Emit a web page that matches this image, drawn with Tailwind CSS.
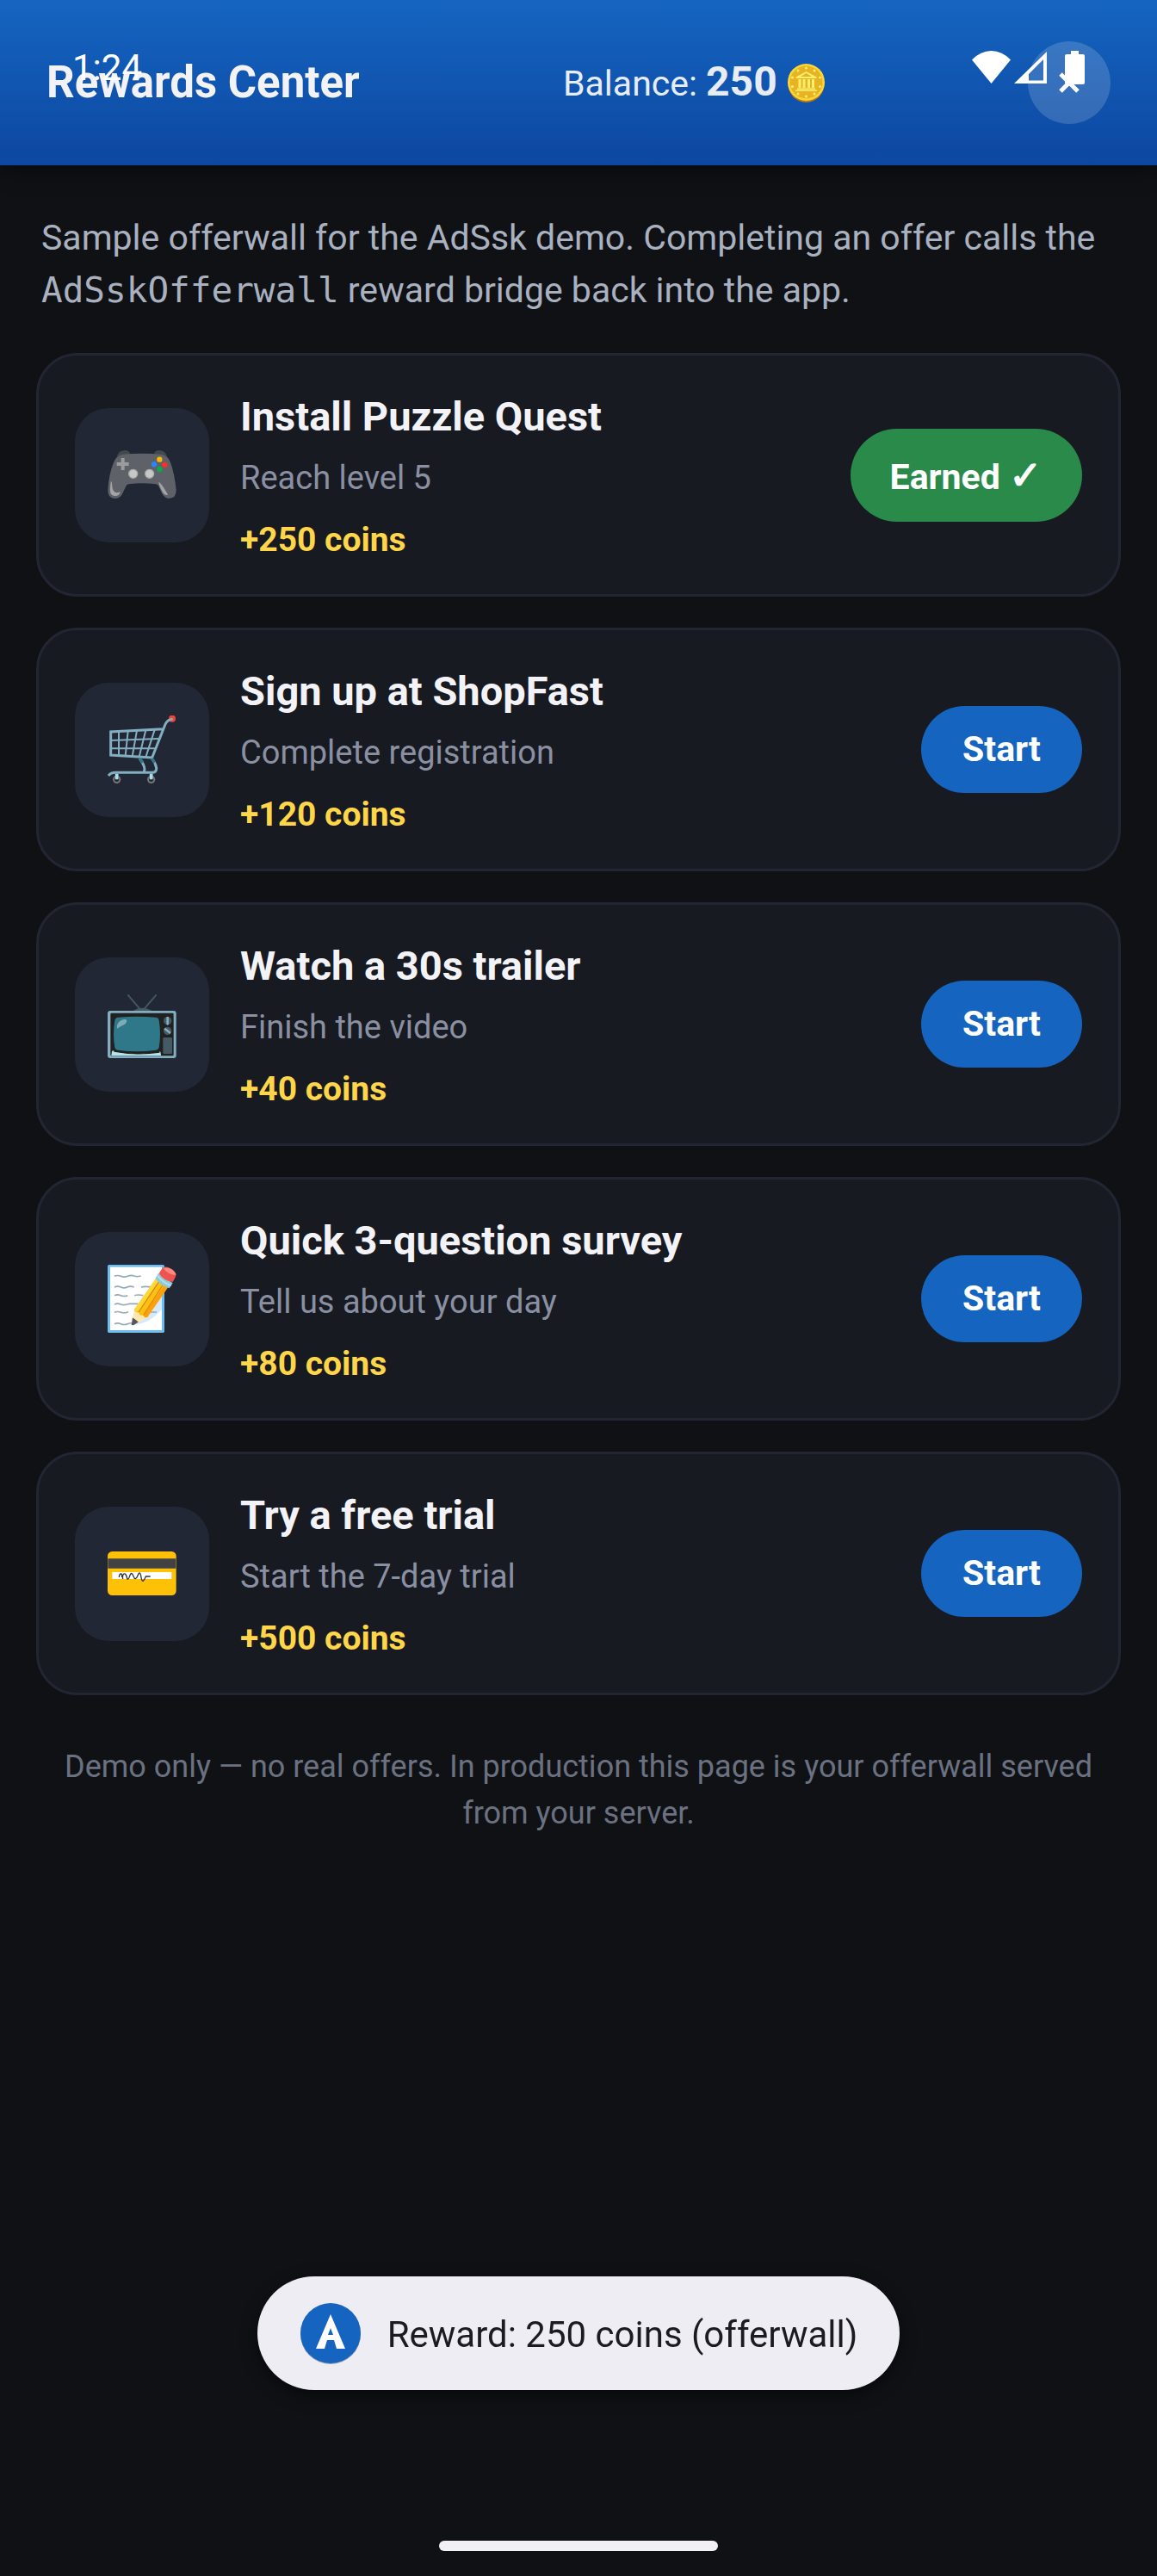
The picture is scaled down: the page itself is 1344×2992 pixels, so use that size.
<!DOCTYPE html>
<html lang="en">
<head>
<meta charset="utf-8">
<meta name="viewport" content="width=device-width, initial-scale=1">
<title>Rewards Center</title>
<script src="https://cdn.jsdelivr.net/npm/@tailwindcss/browser@4"></script>
</head>
<body class="relative min-h-screen bg-[#0f1115] font-['Roboto',sans-serif] text-[#f2f2f7]">

<header class="flex h-48 items-center justify-between bg-linear-to-b from-[#1565c0] to-[#0d47a1] px-[54px] shadow-[0_6px_24px_rgba(0,0,0,0.4)]">
  <h1 class="text-[51px] leading-[60px] font-bold">Rewards Center</h1>
  <p class="flex items-baseline gap-3 text-[41px] leading-[60px] text-[#e8ecf5]">
    <span>Balance: <b class="text-[48px] font-bold">250</b></span>
    <svg class="h-[45px] w-[43px] self-center" viewBox="0 0 86 90" aria-label="coin">
      <ellipse cx="43" cy="47" rx="42" ry="43" fill="#c47a12"/>
      <ellipse cx="43" cy="43" rx="43" ry="43" fill="#fdd835"/>
      <ellipse cx="43" cy="43" rx="38" ry="38" fill="#e6b422"/>
      <g fill="#fdee6b">
        <path d="M43 18 19 31v3h48v-3zM22 57h42v3H22zM18 61h50v3H18z"/>
        <path d="M25 36h6v20h-6zM35 36h6v20h-6zM46 36h6v20h-6zM56 36h6v20h-6z"/>
        <circle cx="43" cy="10" r="3"/><circle cx="24" cy="16" r="3"/><circle cx="62" cy="16" r="3"/>
        <circle cx="11" cy="32" r="3"/><circle cx="75" cy="32" r="3"/><circle cx="11" cy="53" r="3"/>
        <circle cx="75" cy="53" r="3"/><circle cx="24" cy="70" r="3"/><circle cx="62" cy="70" r="3"/><circle cx="43" cy="76" r="3"/>
      </g>
      <path d="M43 22 30 30h26z" fill="#e6b422"/>
    </svg>
  </p>
  <button type="button" aria-label="Close" class="flex size-24 items-center justify-center rounded-full bg-white/16">
    <svg class="size-6" viewBox="0 0 24 24" fill="none" stroke="#fff" stroke-width="5"><path d="M2 2 22 22M22 2 2 22"/></svg>
  </button>
</header>

<!-- System status bar -->
<div class="pointer-events-none absolute inset-x-0 top-0 flex items-start justify-between px-[84px] pt-[54px] text-white">
  <span class="text-[42px] leading-[50px]">1:24</span>
  <div class="flex items-start pt-[5px]">
    <svg class="h-[39px] w-[45px]" viewBox="0 0 45 39" fill="#fff"><path d="M0 10.500Q10 0 22.500 0T45 10.500L22.500 38z"/></svg>
    <svg class="ml-1 h-[39px] w-[38px]" viewBox="0 0 38 39" fill="#fff" fill-rule="evenodd"><path d="M38 1V38H0zM34 10 17 27V34.500H34z"/></svg>
    <svg class="ml-[21px] h-[39px] w-[23px]" viewBox="0 0 23 39" fill="#fff"><path d="M7 0h9v4h5q2 0 2 2v31q0 2-2 2H2q-2 0-2-2V6q0-2 2-2h5z"/></svg>
  </div>
</div>

<main class="px-[42px] pt-[54px]">
  <p class="px-[6px] text-[41px] leading-[61px] text-[#a9b0bf]">Sample offerwall for the AdSsk demo. Completing an offer calls the <code class="font-['DejaVu_Sans_Mono',monospace] text-[41px]">AdSskOfferwall</code> reward bridge back into the app.</p>

  <ul class="mt-[42px] flex flex-col gap-9">
    <li class="flex items-center gap-9 rounded-[48px] border-3 border-[#222633] bg-[#171a21] px-[42px] py-[39px]">
      <div class="flex size-[156px] items-center justify-center rounded-[39px] bg-[#222736]">
        <svg class="size-20" viewBox="195 186 240 240">
          <path d="M227 245q3-25 28-26 15 0 18 12l-5 20zM403 245q-4-25-28-26-15 0-18 12l5 20z" fill="#434a4d"/>
          <path d="M245 234Q315 227 385 234 407 240 415 264 428 300 434 358 434 387 408 387 393 386 384 368L372 342Q369 337 362 337 315 330 268 337 262 338 259 344L246 371Q238 387 220 387 195 386 196 358 200 300 215 264 224 240 245 234z" fill="#5e6268"/>
          <path d="M242 246h12v15h15v12h-15v15h-12v-15h-15v-12h15z" fill="#9b9c9e"/>
          <circle cx="376" cy="251" r="9.500" fill="#fdb605"/><circle cx="357" cy="268" r="9.500" fill="#2886f7"/>
          <circle cx="394" cy="270" r="9.500" fill="#f83126"/><circle cx="376" cy="285" r="9.500" fill="#0aa94b"/>
          <g fill="#c7c7c7" stroke="#aaabac" stroke-width="4"><circle cx="284" cy="301" r="15"/><circle cx="341" cy="301" r="15"/></g>
          <path d="M207 326q3 0 4 20 4 30 28 17-2 16-20 15-16-2-15-20 0-22 3-32zM373 330q6 2 16 17 8 12 16 27-8 3-16-6-14-22-16-38z" fill="#a3a4a6"/>
        </svg>
      </div>
      <div class="min-w-0 flex-1">
        <h2 class="text-[47px] leading-[63px] font-bold">Install Puzzle Quest</h2>
        <p class="mt-[10px] text-[38px] leading-[60px] text-[#8a90a2]">Reach level 5</p>
        <p class="mt-[18px] text-[39px] leading-[48px] font-bold text-[#ffd54a]">+250 coins</p>
      </div>
      <button type="button" class="rounded-full bg-[#2a8a4a] px-[46px] pt-[26px] pb-[22px] text-[41px] leading-[60px] font-bold text-white">Earned <span class="text-[46px] leading-none">✓</span></button>
    </li>

    <li class="flex items-center gap-9 rounded-[48px] border-3 border-[#222633] bg-[#171a21] px-[42px] py-[39px]">
      <div class="flex size-[156px] items-center justify-center rounded-[39px] bg-[#222736]">
        <svg class="size-20" viewBox="195 183 240 240" fill="none">
          <g stroke="#82aec0">
            <path d="M388 230 206 240V321L350 330 396 214Q401 200 422 194" stroke-width="9"/>
            <path d="M234 240v82M266 238 257 324M297 236 281 326M328 234 305 327M359 233 328 328" stroke-width="6"/>
            <path d="M206 270 372 264M206 298H360" stroke-width="6"/>
            <path d="M198 393Q206 382 222 382H352Q366 380 365 366 363 350 350 334M306 333Q332 366 320 382" stroke-width="9"/>
          </g>
          <path d="m306 333 12 14M349 334l10 13" stroke="#2f7889" stroke-width="10"/>
          <circle cx="420" cy="194" r="12" fill="#f44336"/><path d="m404 202 18-8" stroke="#82aec0" stroke-width="8"/>
          <circle cx="227" cy="406" r="11" stroke="#757575" stroke-width="6"/><circle cx="347" cy="406" r="11" stroke="#757575" stroke-width="6"/>
          <path d="M227 386v20M347 386v20" stroke="#a5dff0" stroke-width="11"/>
        </svg>
      </div>
      <div class="min-w-0 flex-1">
        <h2 class="text-[47px] leading-[63px] font-bold">Sign up at ShopFast</h2>
        <p class="mt-[10px] text-[38px] leading-[60px] text-[#8a90a2]">Complete registration</p>
        <p class="mt-[18px] text-[39px] leading-[48px] font-bold text-[#ffd54a]">+120 coins</p>
      </div>
      <button type="button" class="rounded-full bg-[#1565c0] px-12 py-6 text-[41px] leading-[53px] font-bold text-white">Start</button>
    </li>

    <li class="flex items-center gap-9 rounded-[48px] border-3 border-[#222633] bg-[#171a21] px-[42px] py-[39px]">
      <div class="flex size-[156px] items-center justify-center rounded-[39px] bg-[#222736]">
        <svg class="size-20" viewBox="195 180 240 240">
          <path d="m265 196 42 49M365 196l-42 49" stroke="#455a64" stroke-width="5"/>
          <path d="M284 252q30-19 66 0z" fill="#455a64"/>
          <rect x="195" y="252" width="239" height="165" rx="9" fill="#82aec0"/>
          <rect x="205" y="260" width="220" height="149" rx="4" fill="#212121"/>
          <path d="M208 408 210 394Q214 388 222 394 300 412 374 393 380 390 381 408z" fill="#b2e4ea"/>
          <path d="M217 389Q300 412 378 389L376 398Q300 410 217 395z" fill="#212121"/>
          <path d="M231 275Q298 270 363 275 373 276 374 286 382 335 374 380 372 388 363 389 298 398 231 389 222 388 220 380 212 335 220 286 222 276 231 275z" fill="#2f7889"/>
          <path d="M228 314q-3-16 10-26 12-9 22-5 5 7-5 16-12 5-27 15z" fill="#7eabb6"/>
          <circle cx="404" cy="287" r="14" fill="#455a64"/><circle cx="404" cy="322" r="14" fill="#455a64"/>
          <path d="M404 276v22M396 316l15 12" stroke="#82aec0" stroke-width="8" stroke-linecap="round"/>
          <rect x="388" y="345" width="32" height="57" rx="4" fill="#455a64"/>
        </svg>
      </div>
      <div class="min-w-0 flex-1">
        <h2 class="text-[47px] leading-[63px] font-bold">Watch a 30s trailer</h2>
        <p class="mt-[10px] text-[38px] leading-[60px] text-[#8a90a2]">Finish the video</p>
        <p class="mt-[18px] text-[39px] leading-[48px] font-bold text-[#ffd54a]">+40 coins</p>
      </div>
      <button type="button" class="rounded-full bg-[#1565c0] px-12 py-6 text-[41px] leading-[53px] font-bold text-white">Start</button>
    </li>

    <li class="flex items-center gap-9 rounded-[48px] border-3 border-[#222633] bg-[#171a21] px-[42px] py-[39px]">
      <div class="flex size-[156px] items-center justify-center rounded-[39px] bg-[#222736]">
        <svg class="size-20" viewBox="195 180 240 240">
          <rect x="195" y="180" width="198" height="237" rx="5" fill="#6fbcef"/>
          <rect x="204" y="188" width="180" height="220" fill="#fff"/>
          <path d="M290 390 384 264V334Q350 380 290 390z" fill="#d4eafb"/>
          <path d="M219 220q11-5 22 0t24 0 22-1 24 0M219 258q11-5 22 0t22 0 24 0M312 258q12-4 40 0M219 287q11-5 22 0t24 0M289 287q12-4 30 0M219 318q11-5 22 0t30-2h30M219 346q11-5 22 0t26-2M340 345h26M219 386q11-5 22 0t24 0 20-1" fill="none" stroke="#94aab5" stroke-width="5"/>
          <path d="m278 390 4-26 22 15-19 12z" fill="#5b5557"/>
          <path d="m289 335 46 29-32 17q-9-13-21-17z" fill="#ffe9b0"/>
          <path d="M362 230 404 260 334 362Q324 368 321 356 307 360 303 346 289 348 288 336z" fill="#fdc011"/>
          <path d="M362 230 373 238 304 340Q292 348 288 336z" fill="#fdd835"/>
          <path d="M392 252 404 260 334 362Q324 368 321 356z" fill="#ff9f0b"/>
          <path d="M374 239 303 345M388 249 320 356" stroke="#d88a1c" stroke-width="4"/>
          <path d="M372 209 422 244 410 262Q380 254 361 228z" fill="#90cad9"/>
          <path d="M368 216q18 26 48 37" fill="none" stroke="#b7e2ee" stroke-width="5"/>
          <path d="M386 192Q394 184 408 190 428 198 434 214 432 226 422 240 390 236 374 210z" fill="#ef5350"/>
          <path d="M390 193q12-7 30 4 14 10 12 19-28-2-42-23z" fill="#ff8a80"/>
        </svg>
      </div>
      <div class="min-w-0 flex-1">
        <h2 class="text-[47px] leading-[63px] font-bold">Quick 3-question survey</h2>
        <p class="mt-[10px] text-[38px] leading-[60px] text-[#8a90a2]">Tell us about your day</p>
        <p class="mt-[18px] text-[39px] leading-[48px] font-bold text-[#ffd54a]">+80 coins</p>
      </div>
      <button type="button" class="rounded-full bg-[#1565c0] px-12 py-6 text-[41px] leading-[53px] font-bold text-white">Start</button>
    </li>

    <li class="flex items-center gap-9 rounded-[48px] border-3 border-[#222633] bg-[#171a21] px-[42px] py-[39px]">
      <div class="flex size-[156px] items-center justify-center rounded-[39px] bg-[#222736]">
        <svg class="size-20" viewBox="195 177 240 240">
          <rect x="195" y="219" width="239" height="153" rx="16" fill="#ffc107"/>
          <path d="M196 244h237v34H196z" fill="#424242"/>
          <rect x="211" y="291" width="207" height="24" rx="2" fill="#fff"/>
          <path d="M235 309Q236 297 241 297T245 309M248 315Q246 300 252 297T262 309 272 305 285 305 300 303 312 309 328 306H344" fill="none" stroke="#333" stroke-width="4"/>
        </svg>
      </div>
      <div class="min-w-0 flex-1">
        <h2 class="text-[47px] leading-[63px] font-bold">Try a free trial</h2>
        <p class="mt-[10px] text-[38px] leading-[60px] text-[#8a90a2]">Start the 7-day trial</p>
        <p class="mt-[18px] text-[39px] leading-[48px] font-bold text-[#ffd54a]">+500 coins</p>
      </div>
      <button type="button" class="rounded-full bg-[#1565c0] px-12 py-6 text-[41px] leading-[53px] font-bold text-white">Start</button>
    </li>
  </ul>

  <p class="mt-14 px-[30px] text-center text-[36px] leading-[54px] text-[#6b7180]">Demo only — no real offers. In production this page is your offerwall served from your server.</p>
</main>

<!-- Toast and gesture bar -->
<div class="pointer-events-none fixed inset-x-0 bottom-0 flex flex-col items-center pb-[29px]">
  <div role="status" class="flex h-[132px] items-center gap-[30px] rounded-full bg-[#eeedf4] px-[49px] text-[42px] leading-[60px] text-[#1b1b21] shadow-[0_6px_18px_rgba(0,0,0,0.5)]">
    <svg class="size-[72px]" viewBox="0 0 72 72">
      <circle cx="36" cy="37" r="35" fill="#9aa0b0"/><circle cx="36" cy="36" r="35" fill="#1565c0"/>
      <path fill="#fff" fill-rule="evenodd" d="M36 14 53 54H43L40 44H32L29 54H19zM36 30 33 38H39z"/>
    </svg>
    <span class="pt-1">Reward: 250 coins (offerwall)</span>
  </div>
  <div class="mt-[175px] h-3 w-[324px] rounded-full bg-[#f1f0f4]"></div>
</div>
</body>
</html>
